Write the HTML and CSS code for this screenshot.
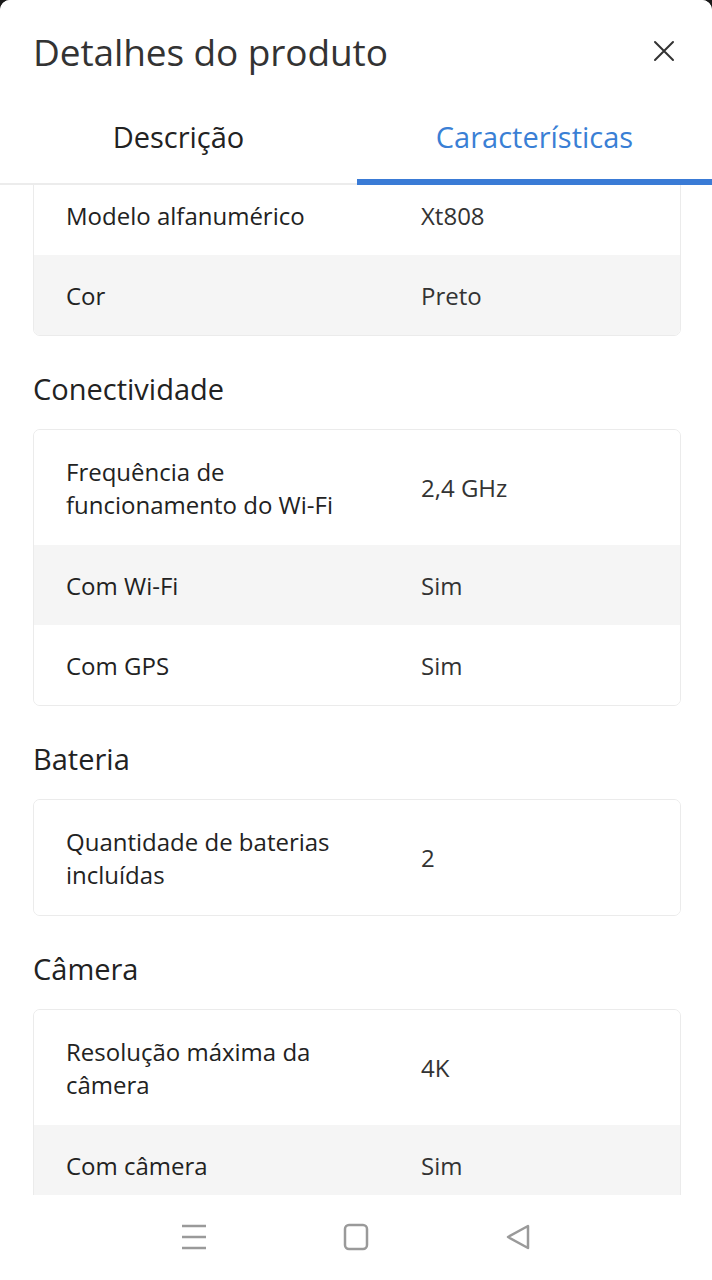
FILE: index.html
```html
<!DOCTYPE html>
<html lang="pt">
<head>
<meta charset="utf-8">
<link rel="stylesheet" href="styles.css">
</head>
<body>
<div class="sheet">
  <header class="header">
    <div class="title-row">
      <h1 class="title">Detalhes do produto</h1>
      <svg class="close" width="22" height="22" viewBox="0 0 22 22"><path d="M2 2L20 20M20 2L2 20" stroke="#333" stroke-width="2" stroke-linecap="round"/></svg>
    </div>
    <nav class="tabs">
      <div class="tab">Descrição</div>
      <div class="tab active">Características</div>
    </nav>
  </header>
  <main class="content">
    <div class="card card-cut">
      <div class="row"><span class="label">Modelo alfanumérico</span><span class="value">Xt808</span></div>
      <div class="row alt"><span class="label">Cor</span><span class="value">Preto</span></div>
    </div>
    <h2 class="section">Conectividade</h2>
    <div class="card">
      <div class="row tall"><span class="label">Frequência de funcionamento do Wi-Fi</span><span class="value">2,4 GHz</span></div>
      <div class="row alt"><span class="label">Com Wi-Fi</span><span class="value">Sim</span></div>
      <div class="row"><span class="label">Com GPS</span><span class="value">Sim</span></div>
    </div>
    <h2 class="section">Bateria</h2>
    <div class="card">
      <div class="row tall"><span class="label">Quantidade de baterias incluídas</span><span class="value">2</span></div>
    </div>
    <h2 class="section">Câmera</h2>
    <div class="card">
      <div class="row tall"><span class="label">Resolução máxima da câmera</span><span class="value">4K</span></div>
      <div class="row alt"><span class="label">Com câmera</span><span class="value">Sim</span></div>
    </div>
  </main>
  <footer class="navbar">
    <svg width="28" height="26" viewBox="0 0 28 26"><path d="M2 2H26M2 13H26M2 24H26" stroke="#9a9a9a" stroke-width="2.5"/></svg>
    <svg width="28" height="28" viewBox="0 0 28 28"><rect x="3" y="2" width="22" height="24" rx="4" fill="none" stroke="#9a9a9a" stroke-width="2.5"/></svg>
    <svg width="28" height="28" viewBox="0 0 28 28"><path d="M24 3V25L4 14Z" fill="none" stroke="#9a9a9a" stroke-width="2.5" stroke-linejoin="round"/></svg>
  </footer>
</div>
</body>
</html>
```
FILE: styles.css
```css
* { box-sizing: border-box; }
html, body { margin: 0; padding: 0; background: #1a1a1a; }
body { font-family: "Open Sans", "Lato", sans-serif; color: #333; }
.sheet {
  width: 712px; height: 1280px; background: #fff;
  border-radius: 10px 10px 0 0; overflow: hidden;
  display: flex; flex-direction: column;
}
.header {
  height: 185px; flex: none; position: relative; z-index: 2;
  background: #fff; border-bottom: 2px solid #ececec;
  display: flex; flex-direction: column;
}
.title-row {
  display: flex; align-items: center; justify-content: space-between;
  padding: 28px 37px 0 33px; height: 74px;
}
.title { margin: 0; font-size: 37px; font-weight: 400; color: #333; letter-spacing: -0.1px; }
.close { display: block; }
.tabs { display: grid; grid-template-columns: 357px 355px; flex: 1; margin-bottom: -2px; }
.tab {
  display: flex; align-items: center; justify-content: center;
  font-size: 29px; color: #222; padding-top: 20px;
  border-bottom: 6px solid transparent;
}
.tab.active { color: #3a7fd5; border-bottom-color: #3a7bd6; border-radius: 6px 6px 0 0; }
.content { flex: 1; overflow: hidden; padding: 0 31px 0 33px; }
.card { border: 1px solid #ebebeb; border-radius: 7px; overflow: hidden; }
.card-cut { margin-top: -11px; }
.row {
  display: grid; grid-template-columns: 322px 1fr; column-gap: 33px;
  align-items: center; min-height: 80px; padding: 0 32px;
  font-size: 24px; line-height: 33px; background: #fff;
}
.row.tall { min-height: 115px; }
.row.alt { background: #f5f5f5; }
.label { color: #222; }
.value { color: #333; }
.section { margin: 33px 0 20px; font-size: 29px; line-height: 40px; font-weight: 400; color: #222; }
.navbar {
  height: 85px; flex: none; background: #fff;
  display: flex; align-items: center; justify-content: center; gap: 134px;
  padding-bottom: 2px;
}
.navbar svg { display: block; }
```
